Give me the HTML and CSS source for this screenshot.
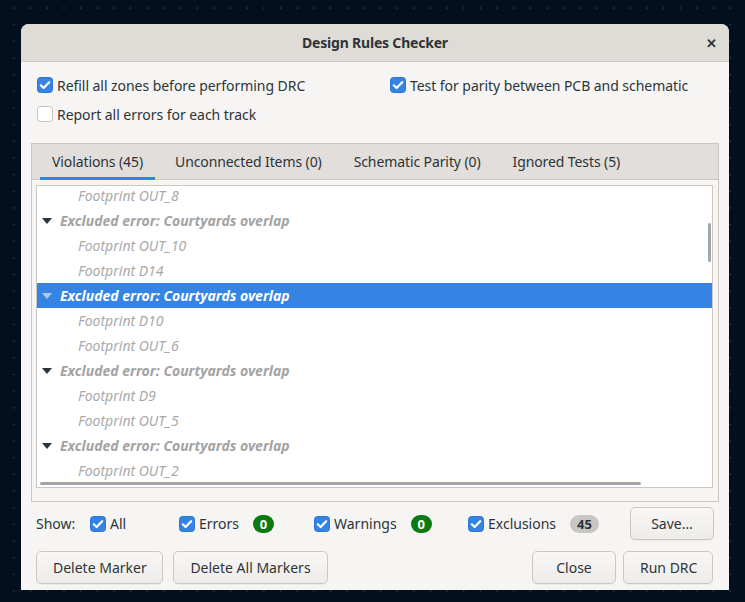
FILE: index.html
```html
<!DOCTYPE html>
<html>
<head>
<meta charset="utf-8">
<link rel="stylesheet" href="styles.css">
</head>
<body>
<div class="dialog">
  <div class="titlebar">
    <span></span>
    <span class="title">Design Rules Checker</span>
    <span class="close">✕</span>
  </div>
  <div class="options">
    <label class="opt"><svg class="cb" viewBox="0 0 16 16"><rect x="0.5" y="0.5" width="15" height="15" rx="3" fill="#3584e4" stroke="#2a76d4"/><path d="M3.8 8.3 L6.6 11 L12.2 5.2" fill="none" stroke="#fff" stroke-width="2.2" stroke-linecap="round" stroke-linejoin="round"/></svg>Refill all zones before performing DRC</label>
    <label class="opt"><svg class="cb" viewBox="0 0 16 16"><rect x="0.5" y="0.5" width="15" height="15" rx="3" fill="#3584e4" stroke="#2a76d4"/><path d="M3.8 8.3 L6.6 11 L12.2 5.2" fill="none" stroke="#fff" stroke-width="2.2" stroke-linecap="round" stroke-linejoin="round"/></svg>Test for parity between PCB and schematic</label>
    <label class="opt"><svg class="cb" viewBox="0 0 16 16"><rect x="0.5" y="0.5" width="15" height="15" rx="3" fill="#ffffff" stroke="#c6c2bd"/></svg>Report all errors for each track</label>
  </div>
  <div class="notebook">
    <div class="tabs">
      <span class="tab active">Violations (45)</span>
      <span class="tab">Unconnected Items (0)</span>
      <span class="tab">Schematic Parity (0)</span>
      <span class="tab">Ignored Tests (5)</span>
    </div>
    <div class="page">
      <div class="list">
        <div class="rows">
          <div class="row child">Footprint OUT_8</div>
          <div class="row parent"><svg class="arrow" viewBox="0 0 10 6"><polygon points="0,0 10,0 5,6"/></svg>Excluded error: Courtyards overlap</div>
          <div class="row child">Footprint OUT_10</div>
          <div class="row child">Footprint D14</div>
          <div class="row parent selected"><svg class="arrow" viewBox="0 0 10 6"><polygon points="0,0 10,0 5,6"/></svg>Excluded error: Courtyards overlap</div>
          <div class="row child">Footprint D10</div>
          <div class="row child">Footprint OUT_6</div>
          <div class="row parent"><svg class="arrow" viewBox="0 0 10 6"><polygon points="0,0 10,0 5,6"/></svg>Excluded error: Courtyards overlap</div>
          <div class="row child">Footprint D9</div>
          <div class="row child">Footprint OUT_5</div>
          <div class="row parent"><svg class="arrow" viewBox="0 0 10 6"><polygon points="0,0 10,0 5,6"/></svg>Excluded error: Courtyards overlap</div>
          <div class="row child">Footprint OUT_2</div>
        </div>
        <div class="vscroll"></div>
        <div class="hscroll"></div>
      </div>
    </div>
  </div>
  <div class="showrow">
    <span class="showlbl">Show:</span>
    <label class="flt f-all"><svg class="cb" viewBox="0 0 16 16"><rect x="0.5" y="0.5" width="15" height="15" rx="3" fill="#3584e4" stroke="#2a76d4"/><path d="M3.8 8.3 L6.6 11 L12.2 5.2" fill="none" stroke="#fff" stroke-width="2.2" stroke-linecap="round" stroke-linejoin="round"/></svg>All</label>
    <label class="flt f-err"><svg class="cb" viewBox="0 0 16 16"><rect x="0.5" y="0.5" width="15" height="15" rx="3" fill="#3584e4" stroke="#2a76d4"/><path d="M3.8 8.3 L6.6 11 L12.2 5.2" fill="none" stroke="#fff" stroke-width="2.2" stroke-linecap="round" stroke-linejoin="round"/></svg>Errors<span class="badge green">0</span></label>
    <label class="flt f-warn"><svg class="cb" viewBox="0 0 16 16"><rect x="0.5" y="0.5" width="15" height="15" rx="3" fill="#3584e4" stroke="#2a76d4"/><path d="M3.8 8.3 L6.6 11 L12.2 5.2" fill="none" stroke="#fff" stroke-width="2.2" stroke-linecap="round" stroke-linejoin="round"/></svg>Warnings<span class="badge green">0</span></label>
    <label class="flt f-exc"><svg class="cb" viewBox="0 0 16 16"><rect x="0.5" y="0.5" width="15" height="15" rx="3" fill="#3584e4" stroke="#2a76d4"/><path d="M3.8 8.3 L6.6 11 L12.2 5.2" fill="none" stroke="#fff" stroke-width="2.2" stroke-linecap="round" stroke-linejoin="round"/></svg>Exclusions<span class="badge grey">45</span></label>
    <button class="btn save">Save…</button>
  </div>
  <div class="btnrow">
    <button class="btn b-del">Delete Marker</button>
    <button class="btn b-delall">Delete All Markers</button>
    <span class="spacer"></span>
    <button class="btn b-close">Close</button>
    <button class="btn b-run">Run DRC</button>
  </div>
</div>
</body>
</html>
```
FILE: styles.css
```css
html, body {
  margin: 0;
  padding: 0;
}
body {
  width: 745px;
  height: 602px;
  overflow: hidden;
  background-color: #020f1f;
  background-image: radial-gradient(circle, #34424f 0.7px, transparent 1.1px);
  background-size: 16.667px 16.667px;
  background-position: 5.7px -0.3px;
  font-family: "Noto Sans", "Open Sans", sans-serif;
  font-size: 14px;
  color: #2e3436;
  padding-top: 24px;
  box-sizing: border-box;
}
.dialog {
  margin-left: 21px;
  width: 708px;
  height: 566px;
  background: #f6f5f4;
  border-radius: 8px 8px 0 0;
  display: flex;
  flex-direction: column;
}
.titlebar {
  height: 37px;
  flex: none;
  background: #dfdcd8;
  border-bottom: 1px solid #cbc6c1;
  border-radius: 8px 8px 0 0;
  display: grid;
  grid-template-columns: 1fr auto 1fr;
  align-items: center;
}
.title {
  font-weight: bold;
  font-size: 14px;
  letter-spacing: -0.2px;
  color: #2e3436;
}
.close {
  justify-self: end;
  padding-right: 12px;
  font-size: 13px;
  font-weight: bold;
  color: #2e3436;
}
.options {
  display: grid;
  grid-template-columns: 353px 1fr;
  row-gap: 9px;
  padding: 13px 16px 0 16px;
  letter-spacing: -0.05px;
}
.opt {
  display: flex;
  align-items: center;
  height: 20px;
  gap: 4px;
  white-space: nowrap;
}
.cb {
  width: 16px;
  height: 16px;
  flex: none;
}
.notebook {
  margin: 19px 10px 0 10px;
  height: 359px;
  flex: none;
  box-sizing: border-box;
  border: 1px solid #cdc7c2;
  display: flex;
  flex-direction: column;
  overflow: hidden;
}
.tabs {
  height: 36px;
  flex: none;
  background: #e1dedb;
  border-bottom: 1px solid #cdc7c2;
  display: flex;
  padding-left: 8px;
  gap: 8px;
  box-sizing: border-box;
  letter-spacing: -0.1px;
}
.tab {
  padding: 0 12px;
  display: flex;
  align-items: center;
  height: 36px;
  box-sizing: border-box;
  padding-top: 1px;
  border-bottom: 3px solid transparent;
  white-space: nowrap;
}
.tab.active {
  border-bottom-color: #3584e4;
}
.page {
  flex: 1;
  min-height: 0;
  padding: 5px 5px 13px 4px;
  display: flex;
}
.list {
  flex: 1;
  position: relative;
  background: #ffffff;
  border: 1px solid #cdc7c2;
  overflow: hidden;
}
.rows {
  margin-top: -3px;
}
.row {
  height: 25px;
  display: flex;
  align-items: center;
  font-style: italic;
  white-space: nowrap;
}
.row.child {
  padding-left: 41px;
  color: #a9a9a9;
}
.row.parent {
  padding-left: 5px;
  font-weight: bold;
  color: #a3a3a3;
}
.arrow {
  width: 10px;
  height: 6px;
  margin-right: 8px;
  fill: #2e3436;
}
.row.selected {
  background: #3584e4;
  color: #ffffff;
}
.row.selected .arrow {
  fill: #a9cbf3;
}
.vscroll {
  position: absolute;
  right: 1px;
  top: 37px;
  width: 3px;
  height: 39px;
  background: #a3a6a8;
  border-radius: 2px;
}
.hscroll {
  position: absolute;
  left: 3px;
  bottom: 2px;
  width: 601px;
  height: 3px;
  background: #a3a6a8;
  border-radius: 2px;
}
.showrow {
  display: flex;
  align-items: center;
  height: 33px;
  flex: none;
  margin-top: 5px;
  padding: 0 15px;
}
.showlbl {
  width: 54px;
}
.flt {
  display: flex;
  align-items: center;
  gap: 4px;
  white-space: nowrap;
}
.f-all { width: 89px; }
.f-err { width: 135px; }
.f-warn { width: 154px; }
.f-exc { flex: 1; }
.badge {
  margin-left: 10px;
  height: 18px;
  min-width: 21px;
  padding: 0 5px;
  box-sizing: border-box;
  border-radius: 9px;
  display: flex;
  align-items: center;
  justify-content: center;
  font-weight: bold;
  font-size: 13px;
}
.badge.green {
  background: #0b7a10;
  color: #ffffff;
}
.badge.grey {
  background: #c8c6c3;
  color: #2e3436;
  min-width: 29px;
}
.btn {
  font-family: inherit;
  font-size: 14px;
  color: #2e3436;
  height: 33px;
  padding: 0 16px;
  background: linear-gradient(#f8f7f6, #eeecea);
  border: 1px solid #cdc7c2;
  border-radius: 5px;
  box-shadow: 0 1px 0 rgba(0,0,0,0.04);
  white-space: nowrap;
}
.save { width: 84px; padding: 0; }
.btnrow {
  display: flex;
  align-items: center;
  flex: none;
  margin-top: 11px;
  padding: 0 16px 0 15px;
  gap: 10px;
}
.spacer { flex: 1; }
.b-close { width: 84px; }
.b-run { width: 90px; margin-left: -3px; }
.b-del { width: 127px; }
.b-delall { width: 155px; }
```
